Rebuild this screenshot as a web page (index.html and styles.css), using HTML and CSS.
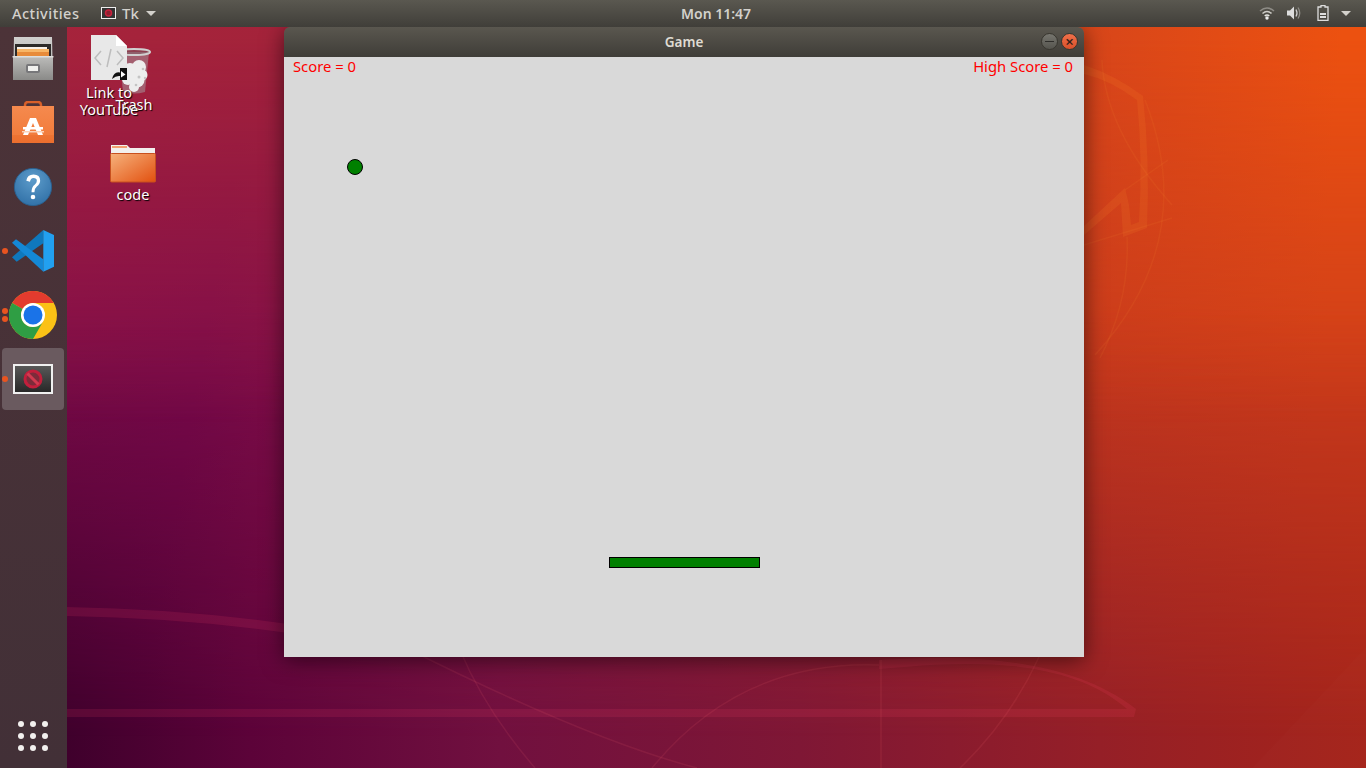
FILE: index.html
```html
<!DOCTYPE html>
<html lang="en">
<head>
<meta charset="utf-8">
<title>Game</title>
<link rel="stylesheet" href="styles.css">
</head>
<body>
<div class="screen">
  <svg class="pattern" viewBox="0 0 1366 768" aria-hidden="true">
    <g class="bands">
      <path d="M67 607Q190 609 300 626V635Q190 618 67 616Z"/>
      <path d="M67 709H1127C1060 650 940 664 879 669V660C940 657 1060 650 1136 709L1134 717H67Z"/>
    </g>
    <g class="lines">
      <path d="M460 650Q485 710 535 768"/>
      <path d="M410 650Q590 740 697 768"/>
      <path d="M652 768Q740 660 879 665"/>
      <path d="M881 660V768"/>
      <path d="M1039 657Q1010 720 960 768"/>
    </g>
    <path class="warm-band" d="M1084 65Q1115 75 1143 96Q1150 160 1147 228L1123 237L1121 203L1084 235V226L1125 188L1129 205L1131 225L1139 222Q1143 160 1137 100Q1110 80 1084 74Z"/>
    <g class="warm-lines">
      <path d="M1102 60Q1105 130 1172 205"/>
      <path d="M1145 100Q1200 240 1095 355"/>
      <path d="M1084 245L1172 218"/>
      <path d="M1125 190L1168 160"/>
      <path d="M1127 237Q1130 300 1100 358"/>
    </g>
    <path class="sheen" d="M1252 768L1366 647V713H1366V768Z"/>
  </svg>

  <header class="topbar">
    <span class="activities">Activities</span>
    <span class="app-menu">
      <svg class="tk-mini" viewBox="0 0 15 12"><rect x=".5" y=".5" width="14" height="11" fill="#333" stroke="#eee"/><circle cx="7.500" cy="6" r="3" fill="#8a2030" stroke="#c8213c" stroke-width="1.500"/></svg>
      <span class="app-name">Tk</span>
      <i class="caret"></i>
    </span>
    <span class="clock">Mon 11:47</span>
    <span class="tray">
      <svg class="tray-icon" viewBox="0 0 16 14"><path d="M1 5Q8-1 15 5" fill="none" stroke="#8e8c86" stroke-width="1.500"/><path d="M3.500 7.500Q8 3.500 12.500 7.500" fill="none" stroke="#cfcdc8" stroke-width="1.500"/><path d="M5.700 9.800Q8 8 10.300 9.800" fill="none" stroke="#e8e8e4" stroke-width="1.500"/><circle cx="8" cy="12" r="1.700" fill="#eee"/></svg>
      <svg class="tray-icon" viewBox="0 0 16 14"><path d="M1 4.500H4L8 .5V13.500L4 9.500H1Z" fill="#ddd"/><path d="M10 3.500Q12 7 10 10.500" fill="none" stroke="#ccc" stroke-width="1.300"/><path d="M12 1.500Q15.500 7 12 12.500" fill="none" stroke="#8e8c86" stroke-width="1.300"/></svg>
      <svg class="tray-icon battery" viewBox="0 0 12 16"><path d="M4 .5H8V2H11V15.500H1V2H4Z" fill="none" stroke="#ddd" stroke-width="1.300"/><rect x="3" y="8" width="6" height="2" fill="#ddd"/><rect x="3" y="11" width="6" height="2" fill="#ddd"/></svg>
      <i class="caret"></i>
    </span>
  </header>

  <div class="workspace">
    <nav class="dock">
      <div class="dock-item">
        <svg class="icon" viewBox="0 0 42 44"><defs><linearGradient id="cab" x1="0" y1="0" x2="0" y2="1"><stop offset="0" stop-color="#d0d0ce"/><stop offset="1" stop-color="#a6a6a4"/></linearGradient><linearGradient id="cabf" x1="0" y1="0" x2="0" y2="1"><stop offset="0" stop-color="#bdbdbb"/><stop offset="1" stop-color="#8a8a88"/></linearGradient></defs><path d="M2 0H40L41 43H1Z" fill="url(#cab)"/><rect x="3" y="7" width="36" height="14" fill="#2c2a28"/><rect x="5" y="10" width="30" height="2" fill="#f6f0e8"/><rect x="5" y="12" width="32" height="3" fill="#f7b566"/><rect x="5" y="15" width="32" height="4" fill="#e78b3a"/><rect x="1" y="19" width="40" height="24" fill="url(#cabf)"/><rect x="0.500" y="19" width="41" height="1.500" fill="#dededc"/><rect x="14" y="27" width="14" height="9" rx="2" fill="#77777a"/><rect x="16" y="29" width="10" height="5" fill="#f0f0ee"/></svg>
      </div>
      <div class="dock-item">
        <svg class="icon" viewBox="0 0 42 44"><defs><linearGradient id="bag" x1="0" y1="0" x2="0" y2="1"><stop offset="0" stop-color="#f58a4e"/><stop offset=".78" stop-color="#f27c3c"/><stop offset=".78" stop-color="#ee7433"/><stop offset="1" stop-color="#ec6e2e"/></linearGradient></defs><path d="M13 9V4Q13 1 16 1H26Q29 1 29 4V9" fill="none" stroke="#d8602a" stroke-width="2.500"/><rect x="0" y="5" width="42" height="37" fill="url(#bag)"/><path d="M18 17H24L31 34H26L21 22L16 34H11Z" fill="#fff"/><rect x="11" y="26" width="20" height="2.500" fill="#fff"/><rect x="10" y="30" width="22" height="1.500" fill="#fbd2b8"/></svg>
      </div>
      <div class="dock-item">
        <svg class="icon" viewBox="0 0 44 44"><defs><radialGradient id="help" cx=".5" cy=".3" r=".8"><stop offset="0" stop-color="#5d9ccb"/><stop offset="1" stop-color="#2c6ca3"/></radialGradient></defs><circle cx="22" cy="22" r="19.500" fill="url(#help)" stroke="#2a5f8e"/><path d="M15 15.500Q16 9 22.500 9Q29.500 9 29.500 15.500Q29.500 19 26 21.500Q23.500 23.500 23.500 27.500H20.500Q20.500 22 24 19.500Q26 17.500 26 15.500Q26 12.500 22.500 12.500Q19.500 12.500 18.800 16.500Z" fill="#fff"/><circle cx="22" cy="32.500" r="2.400" fill="#fff"/></svg>
      </div>
      <div class="dock-item">
        <i class="pip"></i>
        <svg class="icon vscode" viewBox="0 0 42 42"><path d="M31.300 0V13.300L4.700 31.700L0 27.300Z" fill="#0f78bd"/><path d="M0 12.700L4 9.300L31.300 29.300V41.700Z" fill="#1488d6"/><path d="M31.300 0L42 5V36.700L31.300 41.700Z" fill="#22a0f0"/></svg>
      </div>
      <div class="dock-item">
        <i class="pip pip-top"></i><i class="pip pip-bottom"></i>
        <svg class="icon chrome" viewBox="0 0 48 48"><circle cx="24" cy="24" r="24" fill="#fbc116"/><path d="M3.200 12A24 24 0 0 1 44.800 12H24A12 12 0 0 0 13.600 18Z" fill="#e33b2e"/><path d="M3.200 12A24 24 0 0 0 24 48L34.400 30A12 12 0 0 1 13.600 18Z" fill="#2f9e44"/><circle cx="24" cy="24" r="12" fill="#fff"/><circle cx="24" cy="24" r="9.500" fill="#1a73e8"/></svg>
      </div>
      <div class="dock-item active">
        <i class="pip"></i>
        <svg class="icon tk" viewBox="0 0 40 30"><defs><linearGradient id="tkbg" x1="0" y1="0" x2="0" y2="1"><stop offset="0" stop-color="#5a5a5a"/><stop offset="1" stop-color="#262626"/></linearGradient></defs><rect x="1" y="1" width="38" height="28" fill="url(#tkbg)" stroke="#f0f0f0" stroke-width="2"/><circle cx="20" cy="15" r="8" fill="#7d2b3a" stroke="#c21f3c" stroke-width="3"/><path d="M14.500 9.500L25.500 20.500" stroke="#d23a50" stroke-width="3"/></svg>
      </div>
      <div class="dock-item apps">
        <div class="app-grid"><i></i><i></i><i></i><i></i><i></i><i></i><i></i><i></i><i></i></div>
      </div>
    </nav>
  </div>

  <div class="desk-icon trash">
    <svg class="trash-art" viewBox="0 0 34 46"><path d="M2 4L6 44Q17 47 28 44L32 4Z" fill="#a58a92" fill-opacity=".6"/><ellipse cx="17" cy="4" rx="16" ry="3" fill="#7a6068" fill-opacity=".5" stroke="#d0d0d0" stroke-width="2"/><g fill="#ededed"><circle cx="13" cy="22" r="7"/><circle cx="22" cy="19" r="7"/><circle cx="25" cy="27" r="5.500"/><circle cx="11" cy="31" r="6"/><circle cx="20" cy="32" r="7.500"/><circle cx="17" cy="39" r="5"/></g><g fill="#c4c4c4"><circle cx="26" cy="21" r="1.300"/><circle cx="22" cy="29" r="1.500"/><circle cx="28" cy="30" r="1.200"/><circle cx="19" cy="37" r="1.300"/></g></svg>
    <span class="label">Trash</span>
  </div>
  <div class="desk-icon link">
    <svg class="link-art" viewBox="0 0 36 45"><path d="M0 0H25L36 11V45H0Z" fill="#e8e8e8"/><path d="M25 0L36 11H25Z" fill="#fff"/><path d="M10 16L4 23L10 30M26 16L32 23L26 30M20 14L16 32" fill="none" stroke="#bdbdbd" stroke-width="1.500"/><rect x="29" y="33" width="8" height="12" fill="#111"/><path d="M21 44Q23 36 29 37.500V34.500L36 39.500L29 44V41Q25 40.500 21 44Z" fill="#111"/><path d="M30 37V36L34.500 39.500L30 42.500V41Z" fill="#fff"/></svg>
    <span class="label">Link to<br>YouTube</span>
  </div>
  <div class="desk-icon folder">
    <svg class="folder-art" viewBox="0 0 46 38"><defs><linearGradient id="fold" x1="0" y1="0" x2="1" y2="1"><stop offset="0" stop-color="#f6b27c"/><stop offset="1" stop-color="#e2500f"/></linearGradient></defs><path d="M1 0H17L20 3H45V14H1Z" fill="#f2f0ee"/><rect x="2" y="1" width="15" height="2" fill="#f2a070"/><rect x="0.500" y="8.500" width="45" height="28.500" rx="1" fill="url(#fold)" stroke="#c8501e"/></svg>
    <span class="label">code</span>
  </div>

  <section class="window">
    <div class="titlebar">
      <span class="title">Game</span>
      <span class="controls">
        <span class="ctl ctl-min"><i></i></span>
        <span class="ctl ctl-close">×</span>
      </span>
    </div>
    <div class="canvas">
      <span class="score">Score = 0</span>
      <span class="high">High Score = 0</span>
      <i class="ball"></i>
      <i class="paddle"></i>
    </div>
  </section>
</div>
</body>
</html>
```
FILE: styles.css
```css
* { box-sizing: border-box; }
html, body { margin: 0; height: 100%; overflow: hidden; }
body { font-family: "Noto Sans", "Open Sans", sans-serif; }

.screen {
  position: relative;
  width: 1366px;
  height: 768px;
  overflow: hidden;
  display: flex;
  flex-direction: column;
  background: linear-gradient(to right, #3f002c 67px, #5c0339 250px, #71103f 500px, #7f1735 800px, #951f27 1100px, #a5241a 1366px);
}
.screen::before {
  content: "";
  position: absolute;
  inset: 0;
  background: linear-gradient(100deg, #820c4b 0, #7c0a4c 260px, #8a1840 560px, #aa2a30 900px, #c83a1c 1150px, #cd3d1b 1366px);
  -webkit-mask-image: linear-gradient(to bottom, #000 40%, transparent 96%);
  mask-image: linear-gradient(to bottom, #000 40%, transparent 96%);
}
.screen::after {
  content: "";
  position: absolute;
  inset: 0;
  background: linear-gradient(95deg, #a6233c 0, #a4233a 300px, #b32f30 640px, #d8461a 1090px, #ec5110 1340px);
  -webkit-mask-image: linear-gradient(to bottom, #000 5%, transparent 55%);
  mask-image: linear-gradient(to bottom, #000 5%, transparent 55%);
}
.pattern { position: absolute; inset: 0; width: 1366px; height: 768px; z-index: 1; }
.bands path { fill: rgba(255, 70, 110, .13); }
.lines path { fill: none; stroke: rgba(255, 110, 120, .11); stroke-width: 1.5; }
.warm-band { fill: rgba(255, 150, 50, .13); }
.warm-lines path { fill: none; stroke: rgba(255, 150, 60, .09); stroke-width: 1.5; }
.sheen { fill: rgba(255, 255, 255, .012); }

.topbar {
  position: relative;
  z-index: 5;
  flex: none;
  height: 27px;
  display: flex;
  align-items: center;
  padding: 0 0 1px 12px;
  color: #d3d1cc;
  font-size: 14.5px;
  font-weight: 500;
  background: linear-gradient(to bottom, #5a5850, #403e39);
}
.activities { width: 89px; letter-spacing: .5px; }
.app-menu { display: flex; align-items: center; gap: 6px; width: 580px; }
.app-name { font-size: 15px; }
.tk-mini { width: 15px; height: 12px; }
.caret {
  display: block;
  width: 0;
  height: 0;
  margin-left: 1px;
  border: 5px solid transparent;
  border-top: 5px solid #d3d1cc;
  border-bottom: 0;
}
.clock { width: 72px; font-size: 14px; white-space: nowrap; font-weight: 600; }
.tray { display: flex; align-items: center; margin-left: auto; padding-right: 15px; gap: 11px; }
.tray-icon { width: 16px; height: 14px; display: block; }
.battery { width: 12px; height: 16px; margin-left: 4px; }

.workspace { position: relative; z-index: 3; flex: 1; display: flex; min-height: 0; }
.dock {
  width: 67px;
  display: flex;
  flex-direction: column;
  gap: 2px;
  padding: 1px 3px 1px 2px;
  background: linear-gradient(to bottom, #4c3338, #423037);
}
.dock-item {
  position: relative;
  flex: none;
  height: 62px;
  display: flex;
  align-items: center;
  justify-content: center;
  border-radius: 4px;
}
.dock-item.active { background: #6a5a5f; }
.dock-item.apps { margin-top: auto; }
.icon { width: 42px; height: 44px; display: block; }
.vscode { height: 42px; }
.chrome { width: 48px; height: 48px; }
.tk { width: 40px; height: 30px; }
.pip { position: absolute; left: 0; top: 28px; width: 6px; height: 6px; border-radius: 50%; background: #e95420; }
.pip-top { top: 24px; }
.pip-bottom { top: 32px; }
.app-grid { display: grid; grid-template-columns: repeat(3, 6px); gap: 6px; }
.app-grid i { width: 6px; height: 6px; border-radius: 50%; background: #f2f0ee; }

.desk-icon {
  position: absolute;
  z-index: 2;
  display: flex;
  flex-direction: column;
  align-items: center;
  width: 90px;
  color: #fff;
  font-size: 14.5px;
  line-height: 17px;
  text-align: center;
  text-shadow: 1px 1px 1px #000;
}
.trash { left: 89px; top: 48px; }
.trash-art { width: 34px; height: 46px; margin-bottom: 2px; }
.link { left: 64px; top: 35px; }
.link-art { width: 36px; height: 45px; margin-bottom: 4px; }
.folder { left: 88px; top: 145px; }
.folder-art { width: 46px; height: 38px; margin-bottom: 3px; }

.window {
  position: absolute;
  z-index: 4;
  left: 284px;
  top: 27px;
  width: 800px;
  height: 630px;
  display: flex;
  flex-direction: column;
  border-radius: 6px 6px 0 0;
  box-shadow: 0 3px 22px rgba(0, 0, 0, .55);
}
.titlebar {
  position: relative;
  flex: none;
  height: 30px;
  display: flex;
  align-items: center;
  justify-content: center;
  border-radius: 6px 6px 0 0;
  color: #dfdbd2;
  font-size: 13.5px;
  font-weight: 600;
  background: linear-gradient(to bottom, #5a574f, #3f3d38);
}
.controls { position: absolute; right: 6px; top: 6px; display: flex; gap: 3px; }
.ctl {
  width: 17px;
  height: 17px;
  display: flex;
  align-items: center;
  justify-content: center;
  border-radius: 50%;
  font-size: 15px;
  line-height: 1;
  color: #33211a;
}
.ctl-min { background: linear-gradient(#77766f, #55544e); border: 1px solid #38362f; }
.ctl-min i { width: 9px; height: 1px; background: #2e2d2a; }
.ctl-close { background: linear-gradient(#f0704a, #d9502a); border: 1px solid #38362f; }

.canvas { position: relative; flex: 1; background: #d9d9d9; color: #ff0000; font-size: 14.8px; }
.score { position: absolute; left: 9px; top: -1px; }
.high { position: absolute; right: 11px; top: -1px; }
.ball {
  position: absolute;
  left: 63px;
  top: 102px;
  width: 16px;
  height: 16px;
  border-radius: 50%;
  background: #008000;
  border: 1.5px solid #000;
}
.paddle {
  position: absolute;
  left: 325px;
  top: 500px;
  width: 151px;
  height: 11px;
  background: #008000;
  border: 1px solid #000;
}
```
